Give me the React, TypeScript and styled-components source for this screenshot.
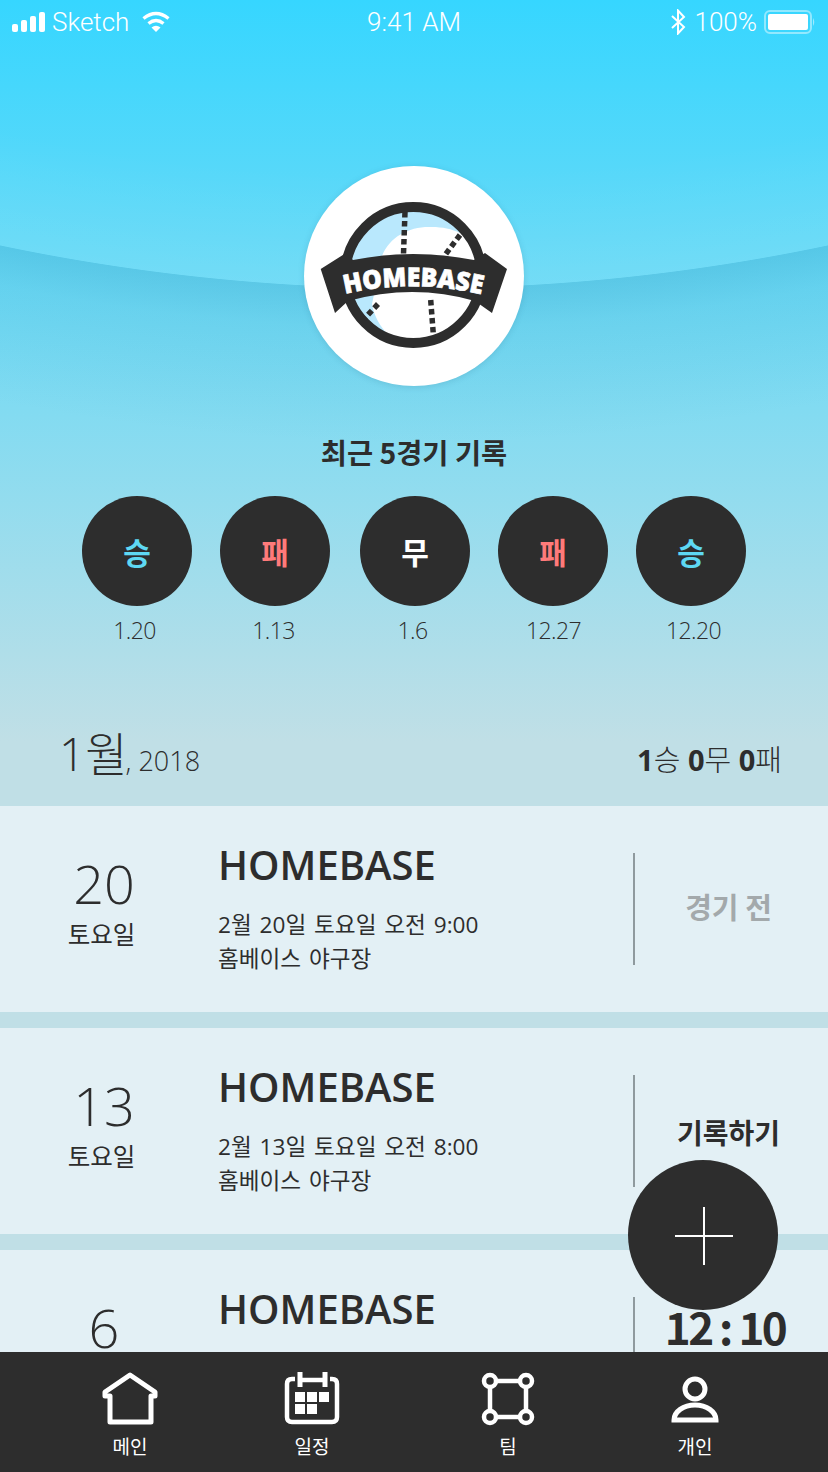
import styled, {createGlobalStyle} from 'styled-components'
import {FunctionComponent, ReactNode} from 'react'

const GlobalStyle = createGlobalStyle`
  html, body {
    margin: 0;
    padding: 0;
    background: #c0dfe6;
  }
  * {
    box-sizing: border-box;
  }
`

const KR = `"Noto Sans CJK KR", "Noto Sans", sans-serif`
const DARK = '#2d2d2d'
const SKY = '#c0dfe6'

const Page = styled.div`
  position: relative;
  display: flex;
  flex-direction: column;
  width: 828px;
  height: 1472px;
  overflow: hidden;
  font-family: ${KR};
  color: ${DARK};
  background: ${SKY};
`

const Scroller = styled.div`
  flex: 1;
  min-height: 0;
  overflow: hidden;
`

const Hero = styled.div`
  position: relative;
  height: 806px;
  display: flex;
  flex-direction: column;
  align-items: center;
  background: linear-gradient(180deg, #36d6ff 0%, #c0dfe6 92%);
`

// big arc: a little lighter above the curve, soft shadow below it
const Wave = styled.div`
  position: absolute;
  inset: 0;
  background: radial-gradient(
    circle at 414px -1726px,
    rgba(255, 255, 255, 0) 1900px,
    rgba(255, 255, 255, 0.06) 2014px,
    rgba(30, 130, 170, 0.2) 2014.8px,
    rgba(30, 130, 170, 0.09) 2054px,
    rgba(30, 130, 170, 0) 2170px
  );
`

const StatusBar = styled.div`
  position: relative;
  align-self: stretch;
  height: 44px;
  display: grid;
  grid-template-columns: 1fr auto 1fr;
  align-items: center;
  padding: 0 12px;
  color: #fff;
  font-family: Roboto, "Liberation Sans", sans-serif;
  font-weight: 300;
  font-size: 26px;
`

const StatusLeft = styled.div`
  display: flex;
  align-items: center;
`

const StatusRight = styled.div`
  display: flex;
  align-items: center;
  justify-content: flex-end;
`

const Carrier = styled.span`
  margin: 0 13px 0 7px;
`

const Percent = styled.span`
  margin: 0 7px 0 9px;
`

const LogoBadge = styled.div`
  position: relative;
  width: 220px;
  height: 220px;
  margin-top: 122px;
  border-radius: 50%;
  background: #fff;
  box-shadow: 0 1px 6px rgba(40, 110, 140, 0.2);
`

const RecordTitle = styled.div`
  position: relative;
  margin-top: 45px;
  font-size: 28.4px;
  line-height: 42px;
  font-weight: 700;
`

const Results = styled.div`
  position: relative;
  display: grid;
  grid-template-columns: 138px 140px 138px 138px 110px;
  margin-top: 23px;
`

const ResultItem = styled.div`
  width: 110px;
  display: flex;
  flex-direction: column;
  align-items: center;
`

const ResultCircle = styled.div<{$tone: string}>`
  width: 110px;
  height: 110px;
  border-radius: 50%;
  background: ${DARK};
  color: ${p => p.$tone};
  display: flex;
  align-items: center;
  justify-content: center;
  font-size: 30px;
  font-weight: 700;
`

const ResultDate = styled.div<{$shift: number}>`
  margin-top: 7px;
  margin-left: ${p => p.$shift}px;
  font-family: "Open Sans", sans-serif;
  font-weight: 300;
  font-size: 23px;
  letter-spacing: -0.6px;
  line-height: 34px;
`

const MonthRow = styled.div`
  position: relative;
  align-self: stretch;
  display: flex;
  justify-content: space-between;
  align-items: baseline;
  margin-top: 75px;
  padding: 0 46px 0 59px;
`

const Month = styled.div`
  font-size: 46px;
  line-height: 62px;
  font-weight: 300;
  font-family: "Open Sans", ${KR};
`

const Year = styled.span`
  margin-left: -2px;
  font-size: 27px;
`

const Tally = styled.div`
  font-size: 29px;
  font-family: "Open Sans", ${KR};
  font-weight: 300;
`

const TallyNum = styled.b`
  font-weight: 700;
`

const Card = styled.div`
  display: grid;
  grid-template-columns: 208px 1fr 195px;
  height: 206px;
  margin-bottom: 16px;
  background: #e3f0f5;
`

const DateCol = styled.div`
  display: flex;
  flex-direction: column;
  align-items: center;
  padding-top: 46px;
`

const DayNum = styled.div`
  font-family: "Open Sans", sans-serif;
  font-weight: 300;
  font-size: 54px;
  line-height: 62px;
`

const DayName = styled.div`
  margin: 3px 5px 0 0;
  font-size: 24.5px;
  line-height: 34px;
`

const InfoCol = styled.div`
  padding: 32px 0 0 10px;
`

const Title = styled.div`
  margin-bottom: 16px;
  font-family: "Open Sans", sans-serif;
  font-weight: 600;
  font-size: 40px;
  line-height: 54px;
`

const Detail = styled.div`
  font-family: "Open Sans", ${KR};
  font-size: 22.6px;
  word-spacing: 2px;
  line-height: 34px;
`

const StatusCol = styled.div`
  margin: 47px 0;
  height: 112px;
  border-left: 2px solid #8f9a9e;
  display: flex;
  justify-content: center;
  padding-right: 6px;
`

const StatusText = styled.div<{$muted?: boolean; $large?: boolean; $top: number; $size: number}>`
  margin-top: ${p => p.$top}px;
  margin-left: ${p => (p.$large ? -7 : 0)}px;
  height: 40px;
  line-height: 40px;
  font-weight: 700;
  white-space: nowrap;
  font-size: ${p => p.$size}px;
  letter-spacing: ${p => (p.$large ? -2.5 : 0)}px;
  color: ${p => (p.$muted ? '#a3a9ab' : DARK)};
`

const Fab = styled.button`
  position: absolute;
  left: 628px;
  top: 1160px;
  width: 150px;
  height: 150px;
  padding: 2px 0 0 2px;
  border: 0;
  border-radius: 50%;
  background: ${DARK};
  display: flex;
  align-items: center;
  justify-content: center;
`

const TabBar = styled.div`
  position: relative;
  height: 120px;
  flex: none;
  display: grid;
  grid-template-columns: 182px 182px 210px 164px;
  padding-left: 39px;
  background: ${DARK};
  color: #fff;
`

const Tab = styled.div`
  display: flex;
  flex-direction: column;
  align-items: center;
  padding-top: 20px;
`

const TabLabel = styled.div`
  margin-top: 6px;
  font-size: 19px;
  line-height: 28px;
`

const HomeIcon = () => (
    <svg width="56" height="54" viewBox="0 0 56 54" fill="none" stroke="#fff" strokeWidth="5" strokeLinejoin="round">
        <path d="M28 3 L53 20 V24 H49 V50 H8 V24 H3 V20 Z"/>
    </svg>
)

const CalendarIcon = () => (
    <svg width="56" height="54" viewBox="0 0 56 54" fill="#fff">
        <path d="M8 7 H11 M18 8 H39 M46 7 H48 Q53 7 53 12 V45 Q53 50 48 50 H8 Q3 50 3 45 V12 Q3 7 8 7" fill="none" stroke="#fff" strokeWidth="4.5"/>
        <rect x="13.5" y="0" width="5" height="15"/>
        <rect x="38.5" y="0" width="5" height="15"/>
        <rect x="11" y="20" width="10" height="10"/>
        <rect x="23" y="20" width="10" height="10"/>
        <rect x="35" y="20" width="10" height="10"/>
        <rect x="11" y="32" width="10" height="10"/>
        <rect x="23" y="32" width="10" height="10"/>
    </svg>
)

const TeamIcon = () => (
    <svg width="54" height="54" viewBox="0 0 54 54" fill={DARK} stroke="#fff" strokeWidth="4.5">
        <rect x="9" y="9" width="36" height="36"/>
        <circle cx="9" cy="9" r="6"/>
        <circle cx="45" cy="9" r="6"/>
        <circle cx="9" cy="45" r="6"/>
        <circle cx="45" cy="45" r="6"/>
    </svg>
)

const PersonIcon = () => (
    <svg width="48" height="54" viewBox="0 0 48 54" fill="none" stroke="#fff" strokeWidth="5">
        <circle cx="24" cy="17" r="10"/>
        <path d="M3 48 A21 15 0 0 1 45 48 Z"/>
    </svg>
)

const SignalIcon = () => (
    <svg width="33" height="20" viewBox="0 0 33 20" fill="#fff">
        <rect x="0" y="12" width="6" height="8" rx="2"/>
        <rect x="9" y="8" width="6" height="12" rx="2"/>
        <rect x="18" y="4" width="6" height="16" rx="2"/>
        <rect x="27" y="0" width="6" height="20" rx="2"/>
    </svg>
)

const WifiIcon = () => (
    <svg width="28" height="22" viewBox="0 0 28 22" fill="none" stroke="#fff" strokeWidth="3.4">
        <path d="M1.5 7.5 Q14 -2.5 26.5 7.5"/>
        <path d="M6.5 12.5 Q14 6.5 21.5 12.5"/>
        <path d="M14 21 L9.5 16.5 Q14 13 18.5 16.5 Z" fill="#fff" stroke="none"/>
    </svg>
)

const BluetoothIcon = () => (
    <svg width="16" height="26" viewBox="0 0 16 26" fill="none" stroke="#fff" strokeWidth="2">
        <path d="M2 7 L14 18 L8 24.5 V1.5 L14 8 L2 19"/>
    </svg>
)

const BatteryIcon = () => (
    <svg width="52" height="24" viewBox="0 0 52 24">
        <rect x="1" y="1" width="46" height="22" rx="5" fill="none" stroke="#fff" strokeOpacity="0.45" strokeWidth="2"/>
        <rect x="4" y="4" width="40" height="16" rx="2" fill="#fff"/>
        <path d="M49 8 Q51.5 12 49 16 Z" fill="#fff" fillOpacity="0.5"/>
    </svg>
)

const PlusIcon = () => (
    <svg width="58" height="58" viewBox="0 0 58 58" stroke="#fff" strokeWidth="2">
        <path d="M29 0 V58 M0 29 H58"/>
    </svg>
)

const Logo = () => (
    <svg width="220" height="220" viewBox="0 0 220 220">
        <defs>
            <clipPath id="ball">
                <circle cx="109.3" cy="109" r="68"/>
            </clipPath>
            <path id="arc" d="M41 128 Q109 112 180 129"/>
        </defs>
        <g clipPath="url(#ball)">
            <rect x="30" y="30" width="160" height="160" fill="#b9e8fd"/>
            <path d="M78 90 C86 70 106 60 128 61 C138 61 148 63 156 67 L200 60 V190 L90 185 L84 169 C76 160 70 150 68 138 Z" fill="#fff"/>
        </g>
        <circle cx="109.3" cy="109" r="68" fill="none" stroke={DARK} strokeWidth="10"/>
        <g fill="none" stroke={DARK} strokeWidth="5.5" strokeDasharray="5.5 3.5">
            <path d="M101 46 L99.5 88"/>
            <path d="M156 69 L141 89"/>
            <path d="M74 138 L60 153"/>
            <path d="M126.7 134 L129.3 168"/>
        </g>
        <path d="M16.7 103 L42 87 L49 94 Q109 82 170 94 L181 87 L203 103 L188 147 L171 135 Q109 117 44 135 L31 147 Z" fill={DARK}/>
        <text fontFamily="'Open Sans', sans-serif" fontWeight="800" fontSize="26" fill="#fff" stroke="#fff" strokeWidth="0.7">
            <textPath href="#arc" textLength="138" lengthAdjust="spacingAndGlyphs">HOMEBASE</textPath>
        </text>
    </svg>
)

const results = [
    {label: '승', tone: '#5ed8f3', date: '1.20', shift: -5},
    {label: '패', tone: '#ff7a7a', date: '1.13', shift: -3},
    {label: '무', tone: '#ffffff', date: '1.6', shift: -5},
    {label: '패', tone: '#ff7a7a', date: '12.27', shift: 1},
    {label: '승', tone: '#5ed8f3', date: '12.20', shift: 5},
]

interface Game {
    day: string
    when: string
    status: ReactNode
}

const games: Game[] = [
    {day: '20', when: '2월 20일 토요일 오전 9:00', status: <StatusText $muted $top={33} $size={29}>경기 전</StatusText>},
    {day: '13', when: '2월 13일 토요일 오전 8:00', status: <StatusText $top={37} $size={28}>기록하기</StatusText>},
    {day: '6', when: '2월 6일 토요일 오전 8:00', status: <StatusText $large $top={9} $size={44}>12 : 10</StatusText>},
]

const GameCard: FunctionComponent<Game> = ({day, when, status}) => (
    <Card>
        <DateCol>
            <DayNum>{day}</DayNum>
            <DayName>토요일</DayName>
        </DateCol>
        <InfoCol>
            <Title>HOMEBASE</Title>
            <Detail>{when}</Detail>
            <Detail>홈베이스 야구장</Detail>
        </InfoCol>
        <StatusCol>{status}</StatusCol>
    </Card>
)

const tabs = [
    {label: '메인', icon: <HomeIcon/>},
    {label: '일정', icon: <CalendarIcon/>},
    {label: '팀', icon: <TeamIcon/>},
    {label: '개인', icon: <PersonIcon/>},
]

const App = () => (
    <Page>
        <GlobalStyle/>
        <Scroller>
            <Hero>
                <Wave/>
                <StatusBar>
                    <StatusLeft>
                        <SignalIcon/>
                        <Carrier>Sketch</Carrier>
                        <WifiIcon/>
                    </StatusLeft>
                    <span>9:41 AM</span>
                    <StatusRight>
                        <BluetoothIcon/>
                        <Percent>100%</Percent>
                        <BatteryIcon/>
                    </StatusRight>
                </StatusBar>
                <LogoBadge>
                    <Logo/>
                </LogoBadge>
                <RecordTitle>최근 5경기 기록</RecordTitle>
                <Results>
                    {results.map((r, i) => (
                        <ResultItem key={i}>
                            <ResultCircle $tone={r.tone}>{r.label}</ResultCircle>
                            <ResultDate $shift={r.shift}>{r.date}</ResultDate>
                        </ResultItem>
                    ))}
                </Results>
                <MonthRow>
                    <Month>1월<Year>, 2018</Year></Month>
                    <Tally><TallyNum>1</TallyNum>승 <TallyNum>0</TallyNum>무 <TallyNum>0</TallyNum>패</Tally>
                </MonthRow>
            </Hero>
            {games.map(g => <GameCard key={g.day} {...g}/>)}
        </Scroller>
        <Fab aria-label="추가"><PlusIcon/></Fab>
        <TabBar>
            {tabs.map(t => (
                <Tab key={t.label}>
                    {t.icon}
                    <TabLabel>{t.label}</TabLabel>
                </Tab>
            ))}
        </TabBar>
    </Page>
)

export default App
